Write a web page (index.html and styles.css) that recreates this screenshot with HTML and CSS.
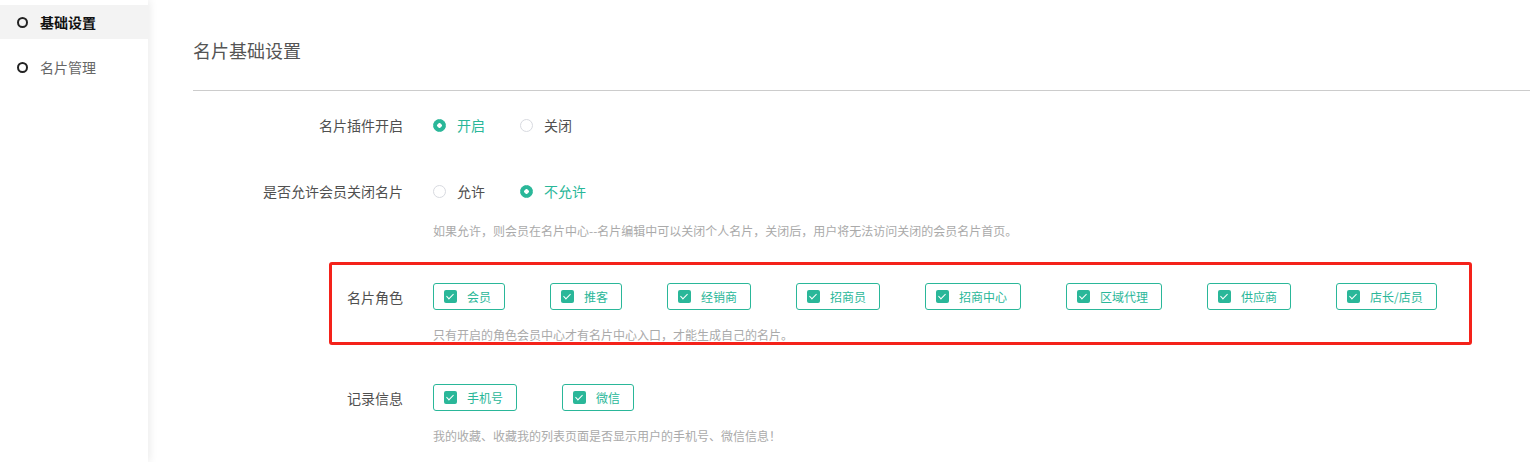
FILE: index.html
```html
<!DOCTYPE html>
<html lang="zh-CN">

<head>
    <meta charset="UTF-8">
    <meta name="viewport" content="width=device-width, initial-scale=1.0">
    <title>名片基础设置</title>
    <link rel="stylesheet" href="styles.css">
</head>

<body>
    <div class="layout">
        <aside class="sidebar">
            <ul class="menu">
                <li class="menu-item active"><span class="dot"></span>基础设置</li>
                <li class="menu-item"><span class="dot"></span>名片管理</li>
            </ul>
        </aside>

        <main class="main">
            <div class="page-title">名片基础设置</div>

            <div class="form">
                <div class="form-item">
                    <div class="form-label">名片插件开启</div>
                    <div class="form-content">
                        <div class="radio-group">
                            <label class="radio checked"><span class="radio-inner"></span>开启</label>
                            <label class="radio"><span class="radio-inner"></span>关闭</label>
                        </div>
                    </div>
                </div>

                <div class="form-item">
                    <div class="form-label">是否允许会员关闭名片</div>
                    <div class="form-content">
                        <div class="radio-group">
                            <label class="radio"><span class="radio-inner"></span>允许</label>
                            <label class="radio checked"><span class="radio-inner"></span>不允许</label>
                        </div>
                        <div class="help">如果允许，则会员在名片中心--名片编辑中可以关闭个人名片，关闭后，用户将无法访问关闭的会员名片首页。</div>
                    </div>
                </div>

                <div class="form-item marked">
                    <div class="form-label">名片角色</div>
                    <div class="form-content">
                        <div class="check-group">
                            <label class="check-btn"><span class="check-box"></span>会员</label>
                            <label class="check-btn"><span class="check-box"></span>推客</label>
                            <label class="check-btn"><span class="check-box"></span>经销商</label>
                            <label class="check-btn"><span class="check-box"></span>招商员</label>
                            <label class="check-btn"><span class="check-box"></span>招商中心</label>
                            <label class="check-btn"><span class="check-box"></span>区域代理</label>
                            <label class="check-btn"><span class="check-box"></span>供应商</label>
                            <label class="check-btn"><span class="check-box"></span>店长/店员</label>
                        </div>
                        <div class="help">只有开启的角色会员中心才有名片中心入口，才能生成自己的名片。</div>
                    </div>
                </div>

                <div class="form-item">
                    <div class="form-label">记录信息</div>
                    <div class="form-content">
                        <div class="check-group">
                            <label class="check-btn"><span class="check-box"></span>手机号</label>
                            <label class="check-btn"><span class="check-box"></span>微信</label>
                        </div>
                        <div class="help">我的收藏、收藏我的列表页面是否显示用户的手机号、微信信息！</div>
                    </div>
                </div>
            </div>
        </main>
    </div>
</body>

</html>
```

FILE: styles.css
```css
body {
    margin: 0;
    padding: 0;
    font-family: "Microsoft YaHei", "Noto Sans CJK SC", "Noto Sans", sans-serif;
    background: #fff;
    color: #555;
}

.layout {
    display: flex;
    height: 462px;
    overflow: hidden;
}

.sidebar {
    width: 148px;
    flex-shrink: 0;
    background: #fff;
    box-shadow: 2px 0 8px rgba(0, 0, 0, 0.08);
    position: relative;
    z-index: 1;
}

.menu {
    list-style: none;
    margin: 0;
    padding: 5px 0 0;
    display: flex;
    flex-direction: column;
    gap: 11px;
}

.menu-item {
    display: flex;
    align-items: center;
    height: 34px;
    padding-left: 17px;
    font-size: 14px;
    color: #666;
}

.menu-item.active {
    background: #f3f3f3;
    color: #111;
    font-weight: bold;
}

.dot {
    width: 7px;
    height: 7px;
    border: 2px solid #222;
    border-radius: 50%;
    margin-right: 12px;
}

.main {
    flex: 1;
    padding: 36px 0 0 45px;
}

.page-title {
    font-size: 18px;
    line-height: 28px;
    color: #555;
    padding-bottom: 26px;
    border-bottom: 1px solid #ccc;
}

.form {
    margin-top: 18px;
}

.form-item {
    display: flex;
    margin-bottom: 34px;
}

.form-item.marked {
    position: relative;
    margin-bottom: 31px;
}

/* red annotation frame */
.form-item.marked::after {
    content: "";
    position: absolute;
    left: 136px;
    right: 58px;
    top: -19px;
    bottom: 6px;
    border: 3px solid #f4221a;
    border-radius: 3px;
}

.form-label {
    width: 240px;
    padding-right: 30px;
    box-sizing: border-box;
    text-align: right;
    font-size: 14px;
    line-height: 32px;
    color: #505050;
}

.form-content {
    flex: 1;
}

.radio-group {
    display: flex;
    align-items: center;
    height: 32px;
}

.radio {
    display: flex;
    align-items: center;
    font-size: 14px;
    color: #505050;
    margin-right: 35px;
}

.radio-inner {
    width: 11px;
    height: 11px;
    border: 1px solid #d8dae0;
    border-radius: 50%;
    margin-right: 11px;
    background: #fff;
    box-sizing: content-box;
}

.radio.checked {
    color: #2ab799;
}

.radio.checked .radio-inner {
    border-color: #2ab799;
    background: radial-gradient(circle, #fff 0 2px, #2ab799 2.5px);
}

.check-group {
    display: flex;
    align-items: center;
    height: 30px;
    gap: 45px;
}

.check-btn {
    display: flex;
    align-items: center;
    height: 27px;
    box-sizing: border-box;
    padding: 0 13px 0 10px;
    border: 1px solid #2ab799;
    border-radius: 3px;
    font-size: 12px;
    color: #2ab799;
}

.check-box {
    position: relative;
    width: 13px;
    height: 13px;
    border-radius: 2px;
    background: #2ab799;
    margin-right: 10px;
}

.check-box::after {
    content: "";
    position: absolute;
    left: 4px;
    top: 2px;
    width: 3px;
    height: 6px;
    border: solid #fff;
    border-width: 0 1.5px 1.5px 0;
    transform: rotate(45deg);
}

.help {
    margin-top: 14px;
    padding-bottom: 6px;
    font-size: 12px;
    line-height: 20px;
    color: #aaa;
}
```
